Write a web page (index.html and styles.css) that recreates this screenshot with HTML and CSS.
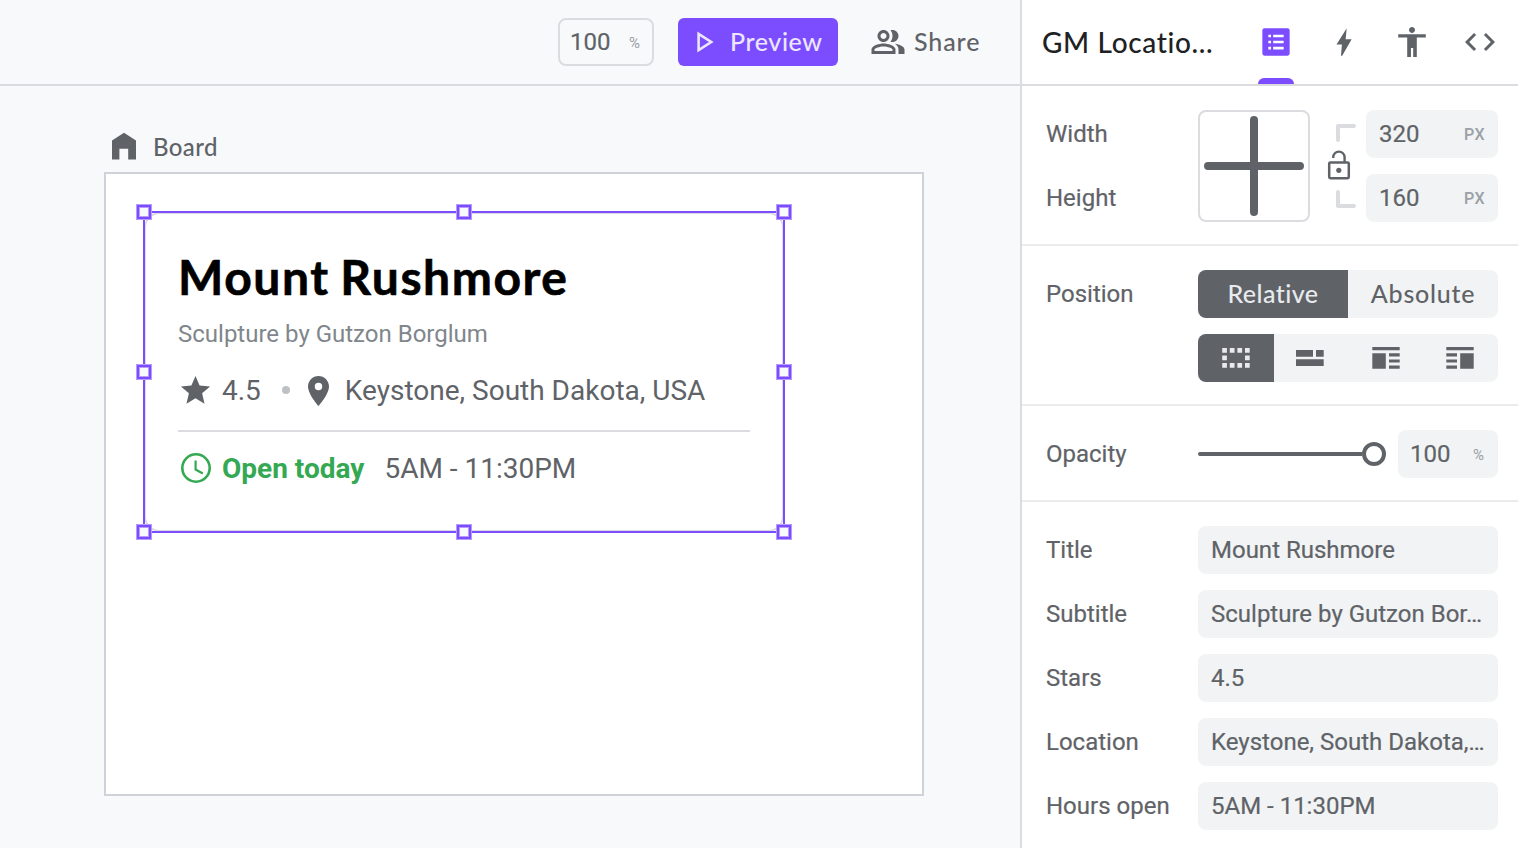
FILE: index.html
```
<!DOCTYPE html>
<html lang="en">
<head>
<meta charset="utf-8">
<title>Board</title>
<link rel="stylesheet" href="styles.css">
</head>
<body>
<div class="app">
  <div class="workspace">
    <header class="toolbar">
      <div class="zoom-field"><span class="value">100</span><span class="unit unit-percent">%</span></div>
      <button class="preview">
        <svg class="play" width="20" height="24" viewBox="0 0 20 24"><path d="M3.6 3.9v16.2L16.2 12z" fill="none" stroke="currentColor" stroke-width="2.6"/></svg>
        <span class="preview-text">Preview</span>
      </button>
      <button class="share">
        <svg width="36" height="36" viewBox="0 0 24 24" fill="currentColor"><path d="M16.67 13.13C18.04 14.06 19 15.32 19 17v3h4v-3c0-2.18-3.57-3.47-6.33-3.87zM15 12c2.21 0 4-1.79 4-4s-1.79-4-4-4c-.47 0-.91.1-1.33.24C14.5 5.27 15 6.58 15 8s-.5 2.73-1.33 3.76c.42.14.86.24 1.33.24zM9 12c2.21 0 4-1.79 4-4s-1.79-4-4-4-4 1.79-4 4 1.79 4 4 4zm0-6c1.1 0 2 .9 2 2s-.9 2-2 2-2-.9-2-2 .9-2 2-2zM9 13c-2.67 0-8 1.34-8 4v3h16v-3c0-2.66-5.33-4-8-4zm6 5H3v-.99C3.2 16.29 6.3 15 9 15s6 1.29 6 2v1z"/></svg>
        <span class="share-text">Share</span>
      </button>
    </header>
    <main class="canvas">
      <div class="board-label">
        <svg class="home" width="24" height="28" viewBox="0 0 24 28" fill="currentColor"><path d="M0 8.6 12 .7l12 7.9V27.5h-7.8V16.7H7.4v10.8H0z"/></svg>
        <span class="board-name">Board</span>
      </div>
      <div class="board">
        <article class="card">
          <h1 class="card-title"><span>Mount Rushmore</span></h1>
          <p class="card-subtitle">Sculpture by Gutzon Borglum</p>
          <div class="card-row">
            <svg class="star" width="35" height="35" viewBox="0 0 24 24" fill="currentColor"><path d="M12 17.27 18.18 21l-1.64-7.03L22 9.24l-7.19-.61L12 2 9.19 8.63 2 9.24l5.46 4.73L5.82 21z"/></svg>
            <span>4.5</span>
            <i class="dot"></i>
            <svg class="pin" width="21" height="30" viewBox="5 2 14 20" fill="currentColor"><path d="M12 2C8.13 2 5 5.13 5 9c0 5.25 7 13 7 13s7-7.75 7-13c0-3.87-3.13-7-7-7zm0 9.500a2.500 2.500 0 0 1 0-5 2.500 2.500 0 0 1 0 5z"/></svg>
            <span>Keystone, South Dakota, USA</span>
          </div>
          <div class="card-row hours">
            <svg class="clock" width="30" height="30" viewBox="0 0 30 30" fill="none" stroke="currentColor"><circle cx="15" cy="15" r="13.700" stroke-width="2.600"/><path d="M14.600 7.500v9l7.200 4" stroke-width="2.200"/></svg>
            <b class="open">Open today</b>
            <span>5AM - 11:30PM</span>
          </div>
          <div class="selection">
            <i class="handle nw"></i><i class="handle n"></i><i class="handle ne"></i><i class="handle w"></i>
            <i class="handle e"></i><i class="handle sw"></i><i class="handle s"></i><i class="handle se"></i>
          </div>
        </article>
      </div>
    </main>
  </div>
  <aside class="inspector">
    <header class="inspector-head">
      <h2 class="component-name"><span>GM Locatio...</span></h2>
      <nav class="tabs">
        <a class="tab active"><svg width="36" height="36" viewBox="0 0 24 24" fill="currentColor"><path fill-rule="evenodd" d="M4.300 2.800h15.400a1.400 1.400 0 0 1 1.400 1.400v15.500a1.400 1.400 0 0 1-1.400 1.400H4.300a1.400 1.400 0 0 1-1.400-1.400V4.200a1.400 1.400 0 0 1 1.400-1.400zM6.900 7.100v1.700h1.800V7.100zM10.100 7.100v1.700h7V7.100zM6.900 11.100v1.800h1.800v-1.800zM10.100 11.100v1.800h7v-1.800zM6.900 15.200v1.800h1.800v-1.800zM10.100 15.200v1.800h7v-1.800z"/></svg></a>
        <a class="tab"><svg width="36" height="36" viewBox="0 0 24 24" fill="currentColor"><path d="M13.900 2.700 7 13.600h3.600L10 21.200h.8L17.100 10.200h-4l.7-7.500z"/></svg></a>
        <a class="tab"><svg width="36" height="36" viewBox="0 0 24 24" fill="currentColor"><path d="M12 2c1.100 0 2 .9 2 2s-.9 2-2 2-2-.9-2-2 .9-2 2-2zm9.200 7h-6v13h-2.400v-6h-1.500v6H8.800V9h-6V6.800h18.400z"/></svg></a>
        <a class="tab"><svg width="36" height="36" viewBox="0 0 24 24" fill="currentColor"><path d="M9.400 16.600 4.800 12l4.600-4.600L8 6l-6 6 6 6zm5.200 0 4.600-4.600-4.600-4.600L16 6l6 6-6 6z"/></svg></a>
      </nav>
    </header>

    <section class="section size">
      <div class="size-labels"><label>Width</label><label>Height</label></div>
      <div class="anchor"><svg width="100" height="100" viewBox="0 0 100 100" stroke="#5f6368" stroke-width="8" stroke-linecap="round"><path d="M50 4v92M4 50h92"/></svg></div>
      <svg class="lock" width="30" height="84" viewBox="0 0 30 84" fill="none">
        <path d="M28 2H12v14M28 82H12V68" stroke="#dadce0" stroke-width="4" stroke-linecap="round" stroke-linejoin="round"/>
        <rect x="3.200" y="38.400" width="19.600" height="15.800" rx="1.200" stroke="#5f6368" stroke-width="2.500"/>
        <path d="M7.200 34v-.7a5.700 5.700 0 0 1 11.400 0v5" stroke="#5f6368" stroke-width="2.400"/>
        <circle cx="12.800" cy="46.300" r="2.600" fill="#5f6368"/>
      </svg>
      <div class="size-fields">
        <div class="field"><span class="value">320</span><span class="unit">PX</span></div>
        <div class="field"><span class="value">160</span><span class="unit">PX</span></div>
      </div>
    </section>

    <section class="section">
      <div class="row">
        <label>Position</label>
        <div class="segmented two">
          <button class="segment on"><span class="relative-text">Relative</span></button>
          <button class="segment"><span class="absolute-text">Absolute</span></button>
        </div>
      </div>
      <div class="row">
        <label></label>
        <div class="segmented four">
          <button class="segment on"><svg width="28" height="20" viewBox="0 0 28 20" fill="currentColor"><path d="M.2 0h4.700v4.700H.2zM7.800 0h4.700v4.700H7.800zM15.400 0h4.700v4.700h-4.700zM23 0h4.700v4.700H23zM.2 7.500h4.700v4.700H.2zM23 7.500h4.700v4.700H23zM.2 15h4.700v4.700H.2zM7.800 15h4.700v4.700H7.800zM15.400 15h4.700v4.700h-4.700zM23 15h4.700v4.700H23z"/></svg></button>
          <button class="segment"><svg width="28" height="16" viewBox="0 0 28 16" fill="currentColor"><path d="M0 0h17v6.700H0zM20 0h7.700v6.700H20zM0 9.200h27.700v6.700H0z"/></svg></button>
          <button class="segment"><svg width="28" height="22" viewBox="0 0 28 22" fill="currentColor"><path d="M.3 0h27.400v3.200H.3zM.3 6.300h13.500v15.400H.3zM17 6.300h10.700v3.200H17zM17 12.400h10.700v3.200H17zM17 18.500h10.700v3.200H17z"/></svg></button>
          <button class="segment"><svg width="28" height="22" viewBox="0 0 28 22" fill="currentColor"><path d="M.3 0h27.400v3.200H.3zM14.200 6.300h13.500v15.400H14.200zM.3 6.300H11v3.200H.3zM.3 12.400H11v3.200H.3zM.3 18.500H11v3.200H.3z"/></svg></button>
        </div>
      </div>
    </section>

    <section class="section">
      <div class="row">
        <label>Opacity</label>
        <div class="slider"><i class="track"></i><i class="knob"></i></div>
        <div class="field opacity"><span class="value">100</span><span class="unit unit-percent">%</span></div>
      </div>
    </section>

    <section class="section props">
      <div class="row"><label>Title</label><div class="field text">Mount Rushmore</div></div>
      <div class="row"><label>Subtitle</label><div class="field text">Sculpture by Gutzon Bor…</div></div>
      <div class="row"><label>Stars</label><div class="field text">4.5</div></div>
      <div class="row"><label>Location</label><div class="field text">Keystone, South Dakota,…</div></div>
      <div class="row"><label>Hours open</label><div class="field text">5AM - 11:30PM</div></div>
    </section>
  </aside>
</div>
</body>
</html>
```
FILE: styles.css
```
* { box-sizing: border-box; }
body {
  margin: 0;
  background: #fff;
  color: #5f6368;
  font: 24px/28px Roboto, "Liberation Sans", sans-serif;
  overflow: hidden;
}
svg { display: block; flex: none; }
button {
  margin: 0;
  padding: 0;
  border: 0;
  background: none;
  color: inherit;
  font: inherit;
  letter-spacing: inherit;
}
h1, h2, p { margin: 0; }

.app { display: flex; width: 1518px; height: 848px; }
.workspace {
  display: flex;
  flex-direction: column;
  width: 1020px;
  background: #f8f9fb;
}

/* Toolbar */
.toolbar {
  display: flex;
  align-items: center;
  justify-content: flex-end;
  height: 86px;
  padding-right: 40px;
  border-bottom: 2px solid #dadce0;
  font: 500 25px/30px Lato, sans-serif;
}
.zoom-field {
  display: flex;
  align-items: center;
  justify-content: space-between;
  width: 96px;
  height: 48px;
  padding: 0 12px 0 10px;
  margin-right: 24px;
  border: 2px solid #dadce0;
  border-radius: 8px;
  font: 24px/28px Roboto, sans-serif;
}
.unit { color: #9aa0a6; font-size: 16px; font-weight: 500; letter-spacing: 0.5px; padding-top: 1px; }
.unit-percent { font-size: 15px; font-weight: 400; letter-spacing: 0; }
.preview {
  display: flex;
  align-items: center;
  width: 160px;
  height: 48px;
  padding-left: 17px;
  margin-right: 32px;
  border-radius: 6px;
  background: #7c4dff;
  color: #ece6ff;
}
.preview-text, .share-text, .relative-text, .absolute-text {
  padding-bottom: 2px;
}
.preview-text { margin-left: 15px; letter-spacing: 0.6px; }
.share { display: flex; align-items: center; width: 110px; }
.share-text { margin-left: 8px; letter-spacing: 0.9px; }

/* Canvas */
.canvas { flex: 1; padding: 46px 96px 0 104px; }
.board-label {
  display: flex;
  align-items: center;
  height: 30px;
  margin-bottom: 10px;
  padding-left: 8px;
  font: 500 24px/30px Lato, sans-serif;
}
.home { margin-top: -2px; }
.board-name { margin-left: 17px; letter-spacing: 0.4px; }
.board {
  width: 820px;
  height: 624px;
  padding: 38px;
  border: 2px solid #d0d2d9;
  background: #fff;
}
.card {
  position: relative;
  width: 640px;
  height: 320px;
  padding: 31px 32px 0;
  border: 2px solid #dadce0;
  border-radius: 16px;
}
.card-title {
  height: 65px;
  font: 700 48px/64px Lato, sans-serif;
  letter-spacing: 1.55px;
  word-spacing: -2.5px;
  color: #000;
  -webkit-text-stroke: 0.6px #000;
}
.card-subtitle { height: 40px; line-height: 40px; margin-top: 4px; color: #80868b; }
.card-row {
  display: flex;
  align-items: center;
  height: 76px;
  font-size: 28px;
  line-height: 34px;
  padding-bottom: 3px;
}
.hours { height: 78px; border-top: 2px solid #dadce0; }
.star { margin: 0 9px 0 0; }
.dot { width: 8px; height: 8px; margin: 0 18px 2px 21px; border-radius: 50%; background: #bdc1c6; }
.pin { margin-right: 16px; }
.clock { margin: 0 11px 1px 3px; color: #34a853; }
.open { margin-right: 20px; color: #34a853; }

.selection { position: absolute; inset: -3px; border: 2px solid #7c4dff; }
.handle {
  position: absolute;
  width: 14px;
  height: 14px;
  margin: -8px;
  border: 2px solid #7c4dff;
  background: #f8f9fb;
  box-shadow: 0 0 0 1px #b79cff, inset 0 0 0 1px #b79cff;
}
.nw, .w, .sw { left: 0; }
.ne, .e, .se { right: 0; }
.n, .s { left: calc(50% + 1px); }
.nw, .n, .ne { top: 0; }
.sw, .s, .se { bottom: 0; }
.w, .e { top: calc(50% + 1px); }

/* Inspector */
.inspector { width: 498px; border-left: 2px solid #dadce0; background: #fff; }
.inspector-head {
  display: flex;
  height: 86px;
  border-bottom: 2px solid #dadce0;
}
.component-name {
  width: 220px;
  padding-left: 20px;
  color: #202124;
  font: 500 28px/84px Lato, sans-serif;
  letter-spacing: 0.65px;
  white-space: nowrap;
}
.tabs { display: flex; }
.tab {
  display: flex;
  align-items: center;
  justify-content: center;
  position: relative;
  width: 68px;
}
.tab.active { color: #7c4dff; }
.tab.active::after {
  content: "";
  position: absolute;
  left: 16px;
  bottom: 0;
  width: 36px;
  height: 6px;
  border-radius: 6px 6px 0 0;
  background: #7c4dff;
}
.section {
  display: flex;
  flex-direction: column;
  gap: 16px;
  padding: 24px 20px 22px 24px;
  border-bottom: 2px solid #ebebec;
}
.props { border: 0; padding-bottom: 0; }
.row { display: flex; height: 48px; }
label { width: 152px; height: 48px; line-height: 48px; }
.size { flex-direction: row; gap: 0; }
.size-labels, .size-fields { display: flex; flex-direction: column; gap: 16px; }
.anchor {
  display: grid;
  place-items: center;
  width: 112px;
  height: 112px;
  border: 2px solid #dadce0;
  border-radius: 8px;
}
.lock { margin: 14px 10px 0 16px; }
.field {
  display: flex;
  align-items: center;
  justify-content: space-between;
  width: 132px;
  height: 48px;
  padding: 0 13px;
  border-radius: 8px;
  background: #f1f3f4;
}
.field.text { width: 300px; white-space: nowrap; justify-content: flex-start; }
label, .field.text, .value { -webkit-text-stroke: 0.2px currentColor; }
.field.opacity { width: 100px; margin-left: 12px; padding: 0 14px 0 12px; }
.segmented {
  display: flex;
  width: 300px;
  overflow: hidden;
  border-radius: 8px;
  background: #f1f3f4;
  font: 500 25px/30px Lato, sans-serif;
}
.relative-text { letter-spacing: 0.45px; }
.absolute-text { letter-spacing: 0.75px; }
.segment { display: flex; align-items: center; justify-content: center; flex: 1; }
.segment.on { background: #5f6368; color: #e8eaed; }
.four .segment { flex: none; width: 74px; padding-right: 2px; }
.four .segment:first-child, .four .segment:nth-child(3) { width: 76px; padding: 0; }
.slider { display: flex; align-items: center; width: 188px; }
.track { flex: 1; height: 4px; border-radius: 2px 0 0 2px; background: #5f6368; }
.knob { width: 24px; height: 24px; border: 4px solid #5f6368; border-radius: 50%; }
```
